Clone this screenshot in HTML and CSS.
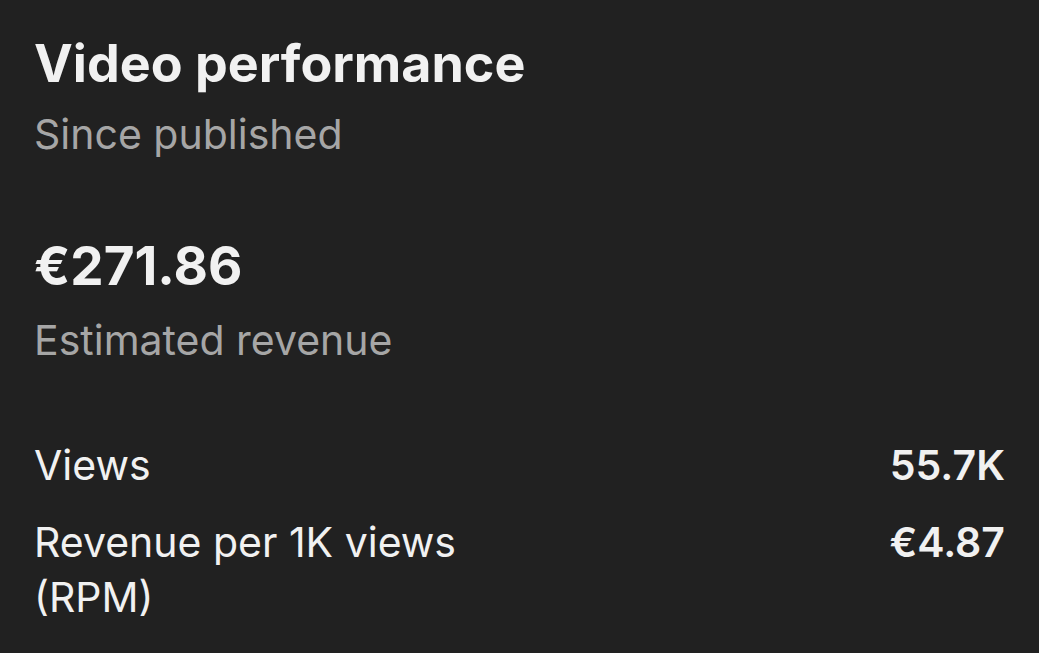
FILE: index.html
```html
<!DOCTYPE html>
<html lang="en">
<head>
    <meta charset="UTF-8">
    <meta name="viewport" content="width=device-width, initial-scale=1.0">
    <title>Video performance</title>
    <link rel="stylesheet" href="styles.css">
</head>
<body>

    <div class="card">
        <h1>Video performance</h1>
        <p class="subtitle">Since published</p>

        <div class="metric">
            <div class="metric-value">€271.86</div>
            <div class="metric-label">Estimated revenue</div>
        </div>

        <div class="stats">
            <div class="stat-row">
                <span class="stat-name">Views</span>
                <span class="stat-value">55.7K</span>
            </div>
            <div class="stat-row">
                <span class="stat-name">Revenue per 1K views (RPM)</span>
                <span class="stat-value">€4.87</span>
            </div>
        </div>
    </div>

</body>
</html>
```

FILE: styles.css
```css
body {
    margin: 0;
    background-color: #212121;
    color: #f1f1f1;
    font-family: Inter, "Noto Sans", sans-serif;
}

.card {
    padding: 34px 34px 0 34px;
}

h1 {
    margin: 0;
    font-size: 52px;
    font-weight: 700;
    line-height: 60px;
}

.subtitle {
    margin: 12px 0 0 0;
    font-size: 41px;
    line-height: 56px;
    color: #a6a6a6;
}

.metric {
    margin-top: 72px;
}

.metric-value {
    font-size: 53px;
    font-weight: 700;
    line-height: 64px;
}

.metric-label {
    margin-top: 14px;
    font-size: 41px;
    line-height: 56px;
    color: #a6a6a6;
}

.stats {
    margin-top: 70px;
}

.stat-row {
    display: flex;
    justify-content: space-between;
    font-size: 41px;
    line-height: 55px;
    margin-bottom: 22px;
}

.stat-name {
    max-width: 470px;
}

.stat-value {
    font-weight: 600;
}
```
